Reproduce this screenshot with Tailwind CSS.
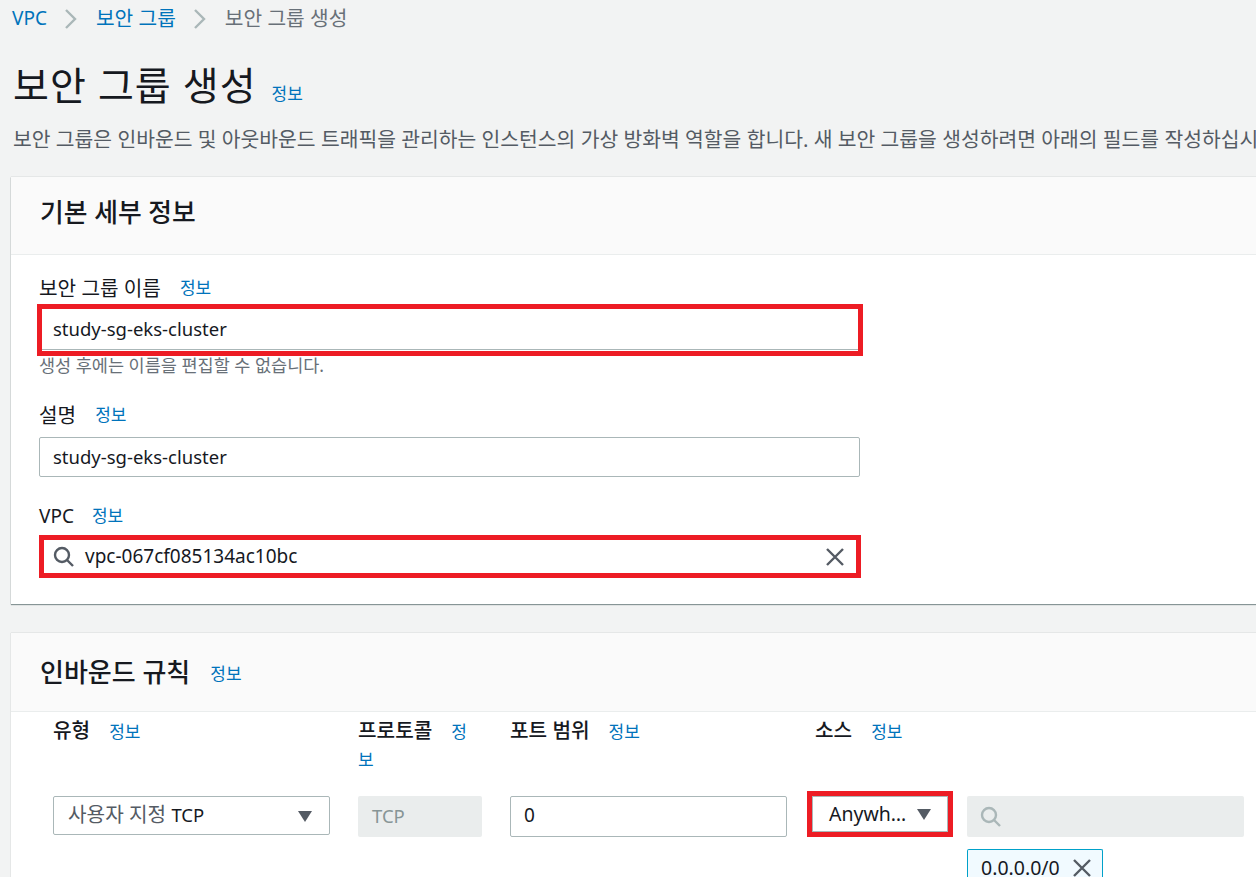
<!DOCTYPE html>
<html lang="ko">
<head>
    <meta charset="UTF-8">
    <meta name="viewport" content="width=device-width, initial-scale=1.0">
    <title>보안 그룹 생성</title>
    <script src="https://cdn.jsdelivr.net/npm/@tailwindcss/browser@4"></script>
</head>
<body class="bg-[#f2f3f3] font-['Noto_Sans','Noto_Sans_CJK_KR',sans-serif] text-[#16191f] h-[877px] w-[1256px] overflow-hidden">
    <!-- breadcrumb -->
    <nav class="flex items-center h-[36px] pl-[12px] text-[20.3px] leading-[36px]">
        <span class="text-[#0073bb] text-[19px]">VPC</span>
        <svg class="w-[14px] h-[22px] ml-[17px] mr-[18px] mt-[2px] text-[#aab7b8]" viewBox="0 0 14 22" fill="none" stroke="currentColor" stroke-width="2.4"><path d="M2 2l9 9-9 9"/></svg>
        <span class="text-[#0073bb]">보안 그룹</span>
        <svg class="w-[14px] h-[22px] ml-[17px] mr-[18px] mt-[2px] text-[#aab7b8]" viewBox="0 0 14 22" fill="none" stroke="currentColor" stroke-width="2.4"><path d="M2 2l9 9-9 9"/></svg>
        <span class="text-[#687078]">보안 그룹 생성</span>
    </nav>

    <!-- page title -->
    <div class="flex items-baseline pl-[13px] mt-[26px] h-[46px]">
        <h1 class="text-[39px] leading-[46px] font-normal tracking-[1px]">보안 그룹 생성</h1>
        <a class="ml-[15px] text-[17px] text-[#0073bb]">정보</a>
    </div>
    <p class="pl-[13px] mt-[18px] text-[20.4px] leading-[26px] text-[#545b64] whitespace-nowrap">보안 그룹은 인바운드 및 아웃바운드 트래픽을 관리하는 인스턴스의 가상 방화벽 역할을 합니다. 새 보안 그룹을 생성하려면 아래의 필드를 작성하십시오.</p>

    <!-- basic details -->
    <section class="ml-[11px] mt-[25px] bg-white shadow-[0_1px_1px_0_#879596,0_0_1px_0_rgba(0,28,36,0.3)] h-[427px]">
        <div class="h-[78px] bg-[#fafafa] border-b border-[#eaeded] pl-[29px] pt-[17px]">
            <h2 class="text-[25.8px] leading-[36px] font-medium">기본 세부 정보</h2>
        </div>
        <div class="pl-[28px] w-[850px]">
            <div class="flex items-center h-[24px] mt-[21px] text-[20.2px] leading-[24px]">
                <label>보안 그룹 이름</label>
                <a class="ml-[19px] text-[17px] text-[#0073bb]">정보</a>
            </div>
            <div class="relative mt-[8px] h-[42px] w-[821px] border border-[#aab7b8] rounded-[2px] pl-[13px] text-[18.5px] leading-[40px]">
                study-sg-eks-cluster
                <div class="absolute -left-[3px] -top-[5px] w-[826px] h-[52px] border-[5px] border-[#ed1c24]"></div>
            </div>
            <p class="mt-[4px] text-[17.5px] leading-[22px] text-[#687078]">생성 후에는 이름을 편집할 수 없습니다.</p>

            <div class="flex items-center h-[24px] mt-[27px] text-[20.2px] leading-[24px]">
                <label>설명</label>
                <a class="ml-[19px] text-[17px] text-[#0073bb]">정보</a>
            </div>
            <div class="mt-[10px] h-[40px] w-[821px] bg-white border border-[#aab7b8] rounded-[2px] pl-[13px] text-[18.5px] leading-[38px]">study-sg-eks-cluster</div>

            <div class="flex items-center h-[24px] mt-[27px] text-[19px] leading-[24px]">
                <label>VPC</label>
                <a class="ml-[18px] text-[17px] text-[#0073bb]">정보</a>
            </div>
            <div class="flex items-center mt-[7px] h-[43px] w-[822px] border-[5px] border-[#ed1c24] pl-[9px] text-[19px]">
                <svg class="w-[22px] h-[22px] shrink-0 text-[#545b64]" viewBox="0 0 22 22" fill="none" stroke="currentColor" stroke-width="2.4"><circle cx="9" cy="9" r="7"/><path d="M14 14l6 6"/></svg>
                <span class="ml-[10px]">vpc-067cf085134ac10bc</span>
                <svg class="ml-auto mr-[11px] w-[20px] h-[20px] text-[#545b64]" viewBox="0 0 20 20" fill="none" stroke="currentColor" stroke-width="2.4"><path d="M2 2l16 16M18 2L2 18"/></svg>
            </div>
        </div>
    </section>

    <!-- inbound rules -->
    <section class="ml-[11px] mt-[29px] bg-white shadow-[0_0_1px_0_rgba(0,28,36,0.3)] h-[244px]">
        <div class="flex items-center h-[79px] bg-[#fafafa] border-b border-[#eaeded] pl-[29px]">
            <h2 class="text-[26px] leading-[36px] font-medium">인바운드 규칙</h2>
            <a class="ml-[20px] mt-[3px] text-[17px] text-[#0073bb]">정보</a>
        </div>
        <div class="grid grid-cols-[305px_152px_305px_152px_277px] pl-[42px] pt-[5px]">
            <div class="text-[20.2px] leading-[27px] font-medium">유형<a class="ml-[19px] text-[17px] font-normal text-[#0073bb]">정보</a></div>
            <div class="text-[20.2px] leading-[27px] font-medium w-[112px]">프로토콜<a class="ml-[19px] text-[17px] font-normal text-[#0073bb]">정보</a></div>
            <div class="text-[20.2px] leading-[27px] font-medium">포트 범위<a class="ml-[19px] text-[17px] font-normal text-[#0073bb]">정보</a></div>
            <div class="text-[20.2px] leading-[27px] font-medium">소스<a class="ml-[19px] text-[17px] font-normal text-[#0073bb]">정보</a></div>
            <div></div>

            <div class="col-span-5 h-[23px]"></div>

            <div class="flex items-center h-[39px] w-[277px] border border-[#aab7b8] rounded-[2px] pl-[14px] pr-[16px] text-[20.2px]">
                <span class="text-[#545b64] -mt-[3px]">사용자 지정 <span class="text-[#16191f] text-[18.5px]">TCP</span></span>
                <svg class="ml-auto w-[16px] h-[12px] text-[#545b64]" viewBox="0 0 16 12" fill="currentColor"><path d="M1 1h14L8 12z"/></svg>
            </div>
            <div class="h-[41px] w-[124px] bg-[#eaeded] rounded-[2px] pl-[14px] text-[18.5px] leading-[39px] text-[#879596]">TCP</div>
            <div class="h-[41px] w-[277px] border border-[#aab7b8] rounded-[2px] pl-[13px] text-[19px] leading-[37px]">0</div>
            <div class="flex items-center h-[46px] w-[146px] -ml-[8px] -mt-[5px] border-[5px] border-[#ed1c24] outline-1 outline-offset-[-6px] outline-[#aab7b8] pl-[17px] pr-[16px] text-[19.5px]">
                Anywh…
                <svg class="ml-auto w-[16px] h-[12px] text-[#545b64]" viewBox="0 0 16 12" fill="currentColor"><path d="M1 1h14L8 12z"/></svg>
            </div>
            <div>
                <div class="flex items-center h-[41px] w-[277px] bg-[#eaeded] rounded-[2px] pl-[13px]">
                    <svg class="w-[22px] h-[22px] text-[#aab7b8]" viewBox="0 0 22 22" fill="none" stroke="currentColor" stroke-width="2.4"><circle cx="9" cy="9" r="7"/><path d="M14 14l6 6"/></svg>
                </div>
                <div class="flex items-center mt-[12px] h-[28px] w-[136px] bg-[#f1faff] border border-b-0 border-[#00a1c9] rounded-t-[2px] pl-[13px] text-[19.5px] leading-[28px] pt-[9px]">
                    0.0.0.0/0
                    <svg class="ml-[12px] w-[20px] h-[20px] text-[#545b64]" viewBox="0 0 20 20" fill="none" stroke="currentColor" stroke-width="2.4"><path d="M2 2l16 16M18 2L2 18"/></svg>
                </div>
            </div>
        </div>
    </section>
</body>
</html>
